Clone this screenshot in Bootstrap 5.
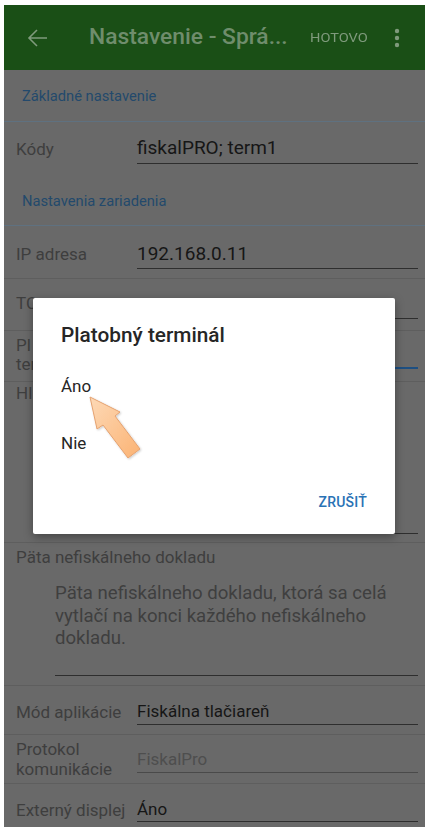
<!DOCTYPE html>
<html lang="sk">
<head>
<meta charset="utf-8">
<title>Nastavenie</title>
<link href="https://cdn.jsdelivr.net/npm/bootstrap@5.3.0/dist/css/bootstrap.min.css" rel="stylesheet">
<style>
html,body{height:100%;background:#fff;font-family:Roboto,"Liberation Sans",sans-serif;overflow:hidden}
.phone{position:relative;width:421px;height:822px;margin:5px 0 0 4px;background:#696969;overflow:hidden}
.topbar{height:65px;background:#1a4f16;padding:0 0 0 23px}
.topbar svg{flex:none}
.apptitle{font-size:22.8px;font-weight:500;margin-left:42px;width:205px;white-space:nowrap;color:#6f8d6c}
.done{font-size:13.5px;transform:scaleX(1.08);transform-origin:left;margin-left:16px;width:84px;color:#7f9a7c}
.section{color:#23496c;font-size:14.7px;padding-left:18px;height:52px;display:flex;align-items:center;padding-top:2px;border-bottom:1px solid #5f7180}
.sec2{height:52px;padding-top:4px}
.frow{display:flex;border-bottom:1px solid #5e5e5e;padding-left:12px;padding-right:7px}
.flabel{width:121px;flex:none;color:#3e3e3e;font-size:17px;line-height:19px}
.fval{flex:1;border-bottom:1.5px solid #2e2e2e;color:#161616;font-size:18px;line-height:24px}
.r-kody{height:52px;border-bottom:0;align-items:flex-start;padding-top:14px}
.r-kody .fval{height:28px;font-size:19px}
.r-ip{height:53px;padding-top:16px}
.r-ip .fval{height:27px;font-size:19px}
.r-ip .flabel{padding-top:3px}
.r-kody .flabel{padding-top:4px}
.r-tcp{height:52px;padding-top:15px}
.r-tcp .fval{height:25px}
.r-pl{height:51px;padding-top:5px}
.r-pl .fval{height:33px;border-bottom:2px solid #1d4f82}
.r-hl{height:161px;padding-top:2px}
.r-hl .fval{height:150px}
.r-pata{height:143px;display:block;padding-top:5px}
.r-pata .flabel{width:auto}
.area{margin-left:39px;margin-top:15px;height:94px;border-bottom:1.5px solid #2e2e2e;color:#3f3f3f;font-size:18.6px;line-height:22.5px}
.r-mod{height:49px;padding-top:12px}
.r-mod .flabel,.r-ext .flabel{padding-top:5px;font-size:17px}
.r-mod .fval,.r-ext .fval{height:27px;font-size:17px;padding-top:1px}
.r-ext .flabel{padding-top:6px}
.r-ext .fval{padding-top:2px}
.r-pro{height:49px;padding-top:4px}
.r-pro .flabel{line-height:20px}
.r-pro .fval{height:34px;border-bottom-color:#4a4a4a;color:#4e4e4e;font-size:17px;padding-top:8px}
.r-ext{height:43px;padding-top:11px;border-bottom:0}
.dialogbox{position:absolute;left:29px;top:293px;width:362px;height:236px;background:#fff;border:0;border-radius:2px;box-shadow:0 3px 10px rgba(0,0,0,.35)}
.dtitle{position:absolute;left:28px;top:24px;font-size:20.8px;font-weight:500;color:#262626;margin:0;line-height:26px}
.dopt{position:absolute;left:28px;font-size:17px;color:#262626;line-height:20px}
.o1{top:78px}.o2{top:135px}
.dcancel{position:absolute;right:28px;top:195px;font-size:14px;font-weight:500;color:#2a72b5;padding:0;border:0;line-height:18px;letter-spacing:.2px}
.pointer{position:absolute;left:76px;top:380px;width:70px;height:80px}
</style>
</head>
<body>
<div class="phone">
  <div class="topbar d-flex align-items-center">
    <svg width="20" height="20" viewBox="0 0 20 20" fill="none" stroke="#7f9a7c" stroke-width="1.6"><path d="M20 10H2M10 2l-8 8 8 8"/></svg>
    <div class="apptitle">Nastavenie - Sprá...</div>
    <div class="done">HOTOVO</div>
    <svg width="6" height="20" viewBox="0 0 6 20" fill="#7f9a7c"><circle cx="3" cy="3" r="2.2"/><circle cx="3" cy="10" r="2.2"/><circle cx="3" cy="17" r="2.2"/></svg>
  </div>
  <div class="section">Základné nastavenie</div>
  <div class="frow r-kody"><div class="flabel">Kódy</div><div class="fval">fiskalPRO; term1</div></div>
  <div class="section sec2">Nastavenia zariadenia</div>
  <div class="frow r-ip"><div class="flabel">IP adresa</div><div class="fval">192.168.0.11</div></div>
  <div class="frow r-tcp"><div class="flabel">TC</div><div class="fval"></div></div>
  <div class="frow r-pl"><div class="flabel">Pl<br>ter</div><div class="fval"></div></div>
  <div class="frow r-hl"><div class="flabel">Hl</div><div class="fval"></div></div>
  <div class="frow r-pata">
    <div class="flabel">Päta nefiskálneho dokladu</div>
    <div class="area">Päta nefiskálneho dokladu, ktorá sa celá vytlačí na konci každého nefiskálneho dokladu.</div>
  </div>
  <div class="frow r-mod"><div class="flabel">Mód aplikácie</div><div class="fval">Fiskálna tlačiareň</div></div>
  <div class="frow r-pro"><div class="flabel">Protokol komunikácie</div><div class="fval">FiskalPro</div></div>
  <div class="frow r-ext"><div class="flabel">Externý displej</div><div class="fval">Áno</div></div>

  <div class="card dialogbox">
    <h5 class="dtitle">Platobný terminál</h5>
    <div class="dopt o1">Áno</div>
    <div class="dopt o2">Nie</div>
    <button type="button" class="btn dcancel">ZRUŠIŤ</button>
  </div>
  <svg class="pointer" viewBox="80 385 70 80">
    <defs><linearGradient id="g" x1="0" y1="0" x2="1" y2="1"><stop offset="0" stop-color="#fdd9b6"/><stop offset="1" stop-color="#fbb374"/></linearGradient>
    <filter id="s" x="-20%" y="-20%" width="140%" height="140%"><feDropShadow dx="1" dy="1" stdDeviation="1" flood-color="#000" flood-opacity=".2"/></filter></defs>
    <polygon points="90,397 120,412 115,416 140,449 128,458 103,425 97,429" fill="url(#g)" stroke="#e5a270" stroke-width="1" filter="url(#s)"/>
  </svg>
</div>
<script src="https://cdn.jsdelivr.net/npm/bootstrap@5.3.0/dist/js/bootstrap.bundle.min.js"></script>
</body>
</html>
